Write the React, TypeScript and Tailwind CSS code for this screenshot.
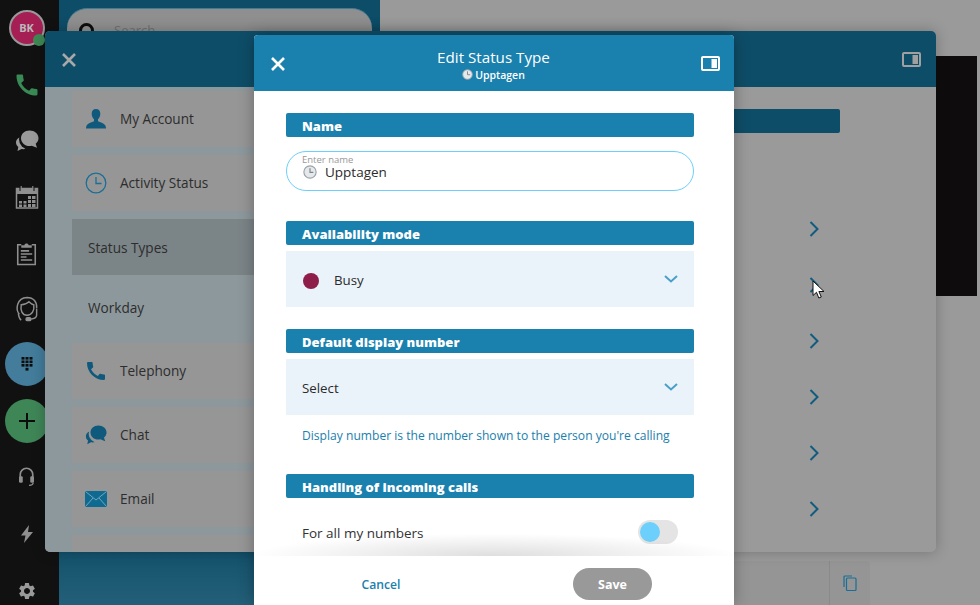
import React from 'react';
import { MdCall, MdSettings } from 'react-icons/md';

const ClockIcon: React.FC<{ className?: string }> = ({ className }) => (
    <svg viewBox="0 0 24 24" className={className} fill="none">
        <circle cx="12" cy="12" r="10.5" fill="#e6e9ec" stroke="#9aa3a8" strokeWidth="2" />
        <path d="M12 6v6.5h5" stroke="#7d868b" strokeWidth="2" strokeLinecap="round" />
    </svg>
);

const ChatIcon: React.FC<{ color: string; cut: string; className?: string }> = ({ color, cut, className }) => (
    <svg viewBox="0 0 24 24" className={className}>
        <path d="M7 8c-3.500 0-6 2.500-6 5.500 0 1.800.9 3.400 2.300 4.400L2.500 22l4-2c3 .6 6-.6 7-3z" fill={color} />
        <circle cx="14" cy="10.500" r="10" fill={cut} />
        <path d="M14.500 1.500c-4.800 0-8.500 3.400-8.500 7.700 0 4.300 3.700 7.800 8.500 7.800.8 0 1.500-.1 2.200-.3l5.300 2-1.300-4c1.800-1.400 2.800-3.400 2.800-5.500 0-4.300-3.800-7.700-9-7.700z" fill={color} />
    </svg>
);

const CalendarIcon: React.FC = () => (
    <svg viewBox="0 0 24 24" className="h-[24px] w-[24px]" fill="none">
        <path d="M1.500 3.500h21v19.500h-21z" stroke="#8f8f8f" strokeWidth="1.500" />
        <path d="M1.500 3.500h21V9h-21z" fill="#8f8f8f" />
        <path d="M6 1v5M18 1v5" stroke="#8f8f8f" strokeWidth="1.500" />
        <path d="M5 1v5M19 1v5" stroke="#111" strokeWidth="1" />
        <path d="M4 16h3v2.500H4zM4 19.500h3V22H4zM8.500 16h3v2.500h-3zM8.500 19.500h3V22h-3zM13 11h3v3h-3zM13 15h3v3h-3zM13 19h3v3h-3zM17 11h3.500v3H17zM17 15h3.500v3H17zM17 19h3.500v3H17z" fill="#8f8f8f" />
    </svg>
);

const ClipboardIcon: React.FC = () => (
    <svg viewBox="0 0 24 28" className="h-[25px] w-[21px]" fill="none">
        <path d="M6 4H2v22.500h20V4h-4" stroke="#8f8f8f" strokeWidth="1.800" />
        <path d="M6 7.500V4.500h3.500C10 2 14 2 14.500 4.500H18v3z" fill="#8f8f8f" />
        <path d="M5.500 11H15M5.500 14.500h13M5.500 18H12M5.500 21.500h13" stroke="#8f8f8f" strokeWidth="1.800" />
    </svg>
);

const AgentIcon: React.FC = () => (
    <svg viewBox="0 0 24 28" className="h-[27px] w-[24px]" fill="none" stroke="#8f8f8f" strokeWidth="1.500">
        <path d="M4 19C0 14 1 2 12 1.500c7 0 10.500 5 10 11" />
        <path d="M6 9c3 0 6-1 8-3 2 2 4 3 5 3 1 6-2 11-7 11S5 15 6 9z" />
        <path d="M3 18c.5 4 1.500 6 3 7M22 13v7c0 3-3 4-8 4" />
        <rect x="11" y="22.500" width="5" height="3" rx="1.500" fill="#8f8f8f" />
    </svg>
);

const DialIcon: React.FC = () => (
    <svg viewBox="0 0 12 14" className="h-[14px] w-[12px]" fill="#0d0d0d">
        {[0, 3.500, 7].map((y) =>
            [0.500, 4.500, 8.500].map((x) => <rect key={`${x}-${y}`} x={x} y={y} width="3" height="2.600" />)
        )}
        <rect x="4.500" y="10.800" width="3" height="2.800" />
    </svg>
);

const HeadsetIcon: React.FC = () => (
    <svg viewBox="0 0 20 24" className="h-[20px] w-[17px]" fill="none">
        <path d="M2.500 14V9a7.500 7.500 0 0 1 15 0v5" stroke="#8f8f8f" strokeWidth="2" />
        <rect x="1" y="11" width="4.500" height="8" rx="1.500" fill="#8f8f8f" />
        <rect x="14.500" y="11" width="4.500" height="8" rx="1.500" fill="#8f8f8f" />
        <path d="M18 19c0 2.500-2 3-5 3" stroke="#8f8f8f" strokeWidth="1.500" />
    </svg>
);

const PanelToggle: React.FC<{ color: string }> = ({ color }) => (
    <svg viewBox="0 0 19 15" className="h-[15px] w-[19px]">
        <rect x="1" y="1" width="17" height="13" rx="1" fill="none" stroke={color} strokeWidth="2" />
        <rect x="10.500" y="3" width="5.500" height="9" fill={color} />
    </svg>
);

const CloseIcon: React.FC<{ color: string }> = ({ color }) => (
    <svg viewBox="0 0 16 16" className="mt-[2px] h-[16px] w-[16px]">
        <path d="M2 2l12 12M14 2L2 14" stroke={color} strokeWidth="2.600" />
    </svg>
);

const SelectChevron: React.FC = () => (
    <svg viewBox="0 0 14 8" className="mb-[5px] h-[8px] w-[14px]" fill="none">
        <path d="M1 1l6 5.500L13 1" stroke="#4a9fc8" strokeWidth="2" />
    </svg>
);

const RowChevron: React.FC = () => (
    <svg viewBox="0 0 10 16" className="h-[16px] w-[10px]" fill="none">
        <path d="M1.500 1l7 7-7 7" stroke="#0f5c7f" strokeWidth="2" />
    </svg>
);

const navTop = [
    {
        label: 'My Account',
        icon: (
            <svg viewBox="0 0 20 20" className="h-[20px] w-[20px]" fill="#0f5a7c">
                <path d="M10 0c2.800 0 4.300 2 4.300 4.800 0 2.500-1 4.500-2.300 5.500v2c1.500 1 6 1.500 7.500 4.500.3.800.5 1.700.5 2.700H0c0-1 .2-1.900.5-2.700C2 13.800 6.500 13.300 8 12.300v-2C6.700 9.300 5.700 7.300 5.700 4.800 5.700 2 7.200 0 10 0z" />
            </svg>
        ),
    },
    {
        label: 'Activity Status',
        icon: (
            <svg viewBox="0 0 22 22" className="h-[22px] w-[22px]" fill="none">
                <circle cx="11" cy="11" r="9.800" stroke="#1a6f96" strokeWidth="1.300" />
                <path d="M11 5v6.500h5.500" stroke="#1a6f96" strokeWidth="1.300" />
            </svg>
        ),
    },
];

const navBottom = [
    { label: 'Telephony', icon: <MdCall className="h-[24px] w-[24px] text-[#0f5a7c]" /> },
    { label: 'Chat', icon: <ChatIcon color="#0f5a7c" cut="#969696" className="h-[22px] w-[22px]" /> },
    {
        label: 'Email',
        icon: (
            <svg viewBox="0 0 22 16" className="h-[16px] w-[22px]" fill="none">
                <rect width="22" height="16" rx="1" fill="#0f6a92" />
                <path d="M.5.500L11 9 21.500.500M.5 15.500l7.500-8.500M21.500 15.500L14 7" stroke="#8fb5c5" strokeWidth=".8" />
            </svg>
        ),
    },
];

const NavCard: React.FC<{ label: string; icon: React.ReactNode }> = ({ label, icon }) => (
    <div className="flex h-[56px] items-center bg-[#969696]">
        <div className="flex w-[48px] shrink-0 justify-center">{icon}</div>
        <span className="text-[13.600px] text-[#2d2d2d]">{label}</span>
    </div>
);

const SectionBar: React.FC<{ label: string; className?: string }> = ({ label, className }) => (
    <div className={`flex h-[24px] items-center rounded-[2px] bg-[#1a80ad] pt-[3px] pl-[16px] text-[13px] font-extrabold text-white ${className ?? ''}`}>
        {label}
    </div>
);

const App: React.FC = () => {
    return (
        <div className="relative flex h-[605px] w-[980px] overflow-hidden bg-[#9a9a9a] font-['Open_Sans',sans-serif]">
            {/* Left rail */}
            <div className="flex h-[605px] w-[59px] shrink-0 flex-col items-center overflow-hidden bg-[#111111] [&>*]:shrink-0">
                <div className="relative mt-[10px] mb-[11px] flex h-[36px] w-[36px] items-center justify-center rounded-full border-2 border-[#999] bg-[#a51f55] text-[11px] font-bold text-[#b9b9b9] -translate-x-[3px]">
                    BK
                    <span className="absolute -right-[2px] -bottom-[2px] h-[12px] w-[12px] rounded-full bg-[#3f8a55]" />
                </div>
                <div className="flex h-[56px] items-center -translate-x-[3px]"><MdCall className="h-[28px] w-[28px] text-[#3a8a55]" /></div>
                <div className="flex h-[56px] items-center -translate-x-[3px]"><ChatIcon color="#9a9a9a" cut="#111111" className="h-[24px] w-[24px]" /></div>
                <div className="flex h-[56px] items-center -translate-x-[3px]"><CalendarIcon /></div>
                <div className="flex h-[56px] items-center -translate-x-[3px]"><ClipboardIcon /></div>
                <div className="flex h-[56px] items-center -translate-x-[3px]"><AgentIcon /></div>
                <div className="mt-[5px] flex h-[44px] w-[44px] items-center justify-center rounded-full bg-[#437d9b] -translate-x-[3px]"><DialIcon /></div>
                <div className="mt-[13px] flex h-[44px] w-[44px] items-center justify-center rounded-full bg-[#3f8657] -translate-x-[3px]">
                    <svg viewBox="0 0 16 16" className="h-[16px] w-[16px]"><path d="M8 0v16M0 8h16" stroke="#0d0d0d" strokeWidth="2" /></svg>
                </div>
                <div className="mt-[6px] flex h-[56px] items-center -translate-x-[3px]"><HeadsetIcon /></div>
                <div className="flex h-[58px] items-center -translate-x-[3px]">
                    <svg viewBox="0 0 12 18" className="h-[18px] w-[12px]" fill="#8f8f8f"><path d="M8 0L0 10.500h4.500L3 18l9-11H7z" /></svg>
                </div>
                <div className="flex h-[56px] items-center -translate-x-[3px]"><MdSettings className="h-[20px] w-[20px] text-[#9a9a9a]" /></div>
            </div>

            {/* Dimmed page behind the windows */}
            <div className="relative h-full w-[321px] shrink-0 bg-[linear-gradient(180deg,#0e4d68_0%,#0e4d68_88%,#235f78_100%)] px-[8px] pt-[8px]">
                <div className="flex h-[60px] rounded-t-[20px] border-t border-[#3f7d95] bg-[#8f8f8f] pl-[12px]">
                    <div className="mt-[14px] h-[15px] w-[15px] rounded-full border-[3px] border-[#0d0d0d]" />
                    <span className="mt-[12px] ml-[20px] text-[13px] text-[#6f6f6f]">Search</span>
                </div>
            </div>
            <div className="relative flex-1">
                <div className="absolute top-[56px] right-[3px] h-[240px] w-[41px] bg-[#0e0c0c]" />
                <div className="absolute right-[110px] bottom-0 flex h-[44px] w-[140px] justify-end rounded-tr-[4px] bg-[#959595]">
                    <div className="flex w-[41px] items-center justify-center border-l border-[#8a8a8a]">
                        <svg viewBox="0 0 14 16" className="h-[16px] w-[14px]" fill="none" stroke="#1a6f96" strokeWidth="1.200">
                            <rect x="3.500" y="3" width="9.500" height="12.500" rx="1" />
                            <path d="M1 12V2a1 1 0 0 1 1-1h7" />
                        </svg>
                    </div>
                </div>
            </div>

            {/* Settings window */}
            <div className="absolute top-[31px] left-[45px] flex h-[521px] w-[891px] flex-col overflow-hidden rounded-[5px] bg-[#9a9a9a] shadow-[0_0_14px_rgba(0,0,0,0.25)]">
                <div className="flex h-[56px] shrink-0 items-center justify-between bg-[#0e4d68] pr-[15px] pl-[16px]">
                    <CloseIcon color="#a8a8a8" />
                    <PanelToggle color="#a0a0a0" />
                </div>
                <div className="flex flex-1">
                    <div className="w-[209px] shrink-0 bg-[#8d989c] pt-[4px] pl-[27px]">
                        <div className="flex flex-col gap-[8px]">
                            {navTop.map((item) => <NavCard key={item.label} {...item} />)}
                            <div className="flex h-[56px] items-center bg-[#7b8487] pt-[2px] pl-[16px] text-[13.600px] text-[#2d2d2d]">Status Types</div>
                        </div>
                        <div className="flex h-[68px] items-center pb-[2px] pl-[16px] text-[13.600px] text-[#2d2d2d]">Workday</div>
                        <div className="flex flex-col gap-[8px]">
                            {navBottom.map((item) => <NavCard key={item.label} {...item} />)}
                            <div className="h-[56px] bg-[#969696]" />
                        </div>
                    </div>
                    <div className="flex-1 pt-[22px] pr-[96px]">
                        <div className="h-[24px] rounded-r-[2px] bg-[#0e4d68]" />
                        <div className="mt-[68px] flex flex-col">
                            {[0, 1, 2, 3, 4, 5].map((i) => (
                                <div key={i} className="flex h-[56px] items-center justify-end pr-[21px]"><RowChevron /></div>
                            ))}
                        </div>
                    </div>
                </div>
            </div>

            {/* Edit dialog */}
            <div className="absolute top-[35px] left-[254px] flex h-[570px] w-[480px] flex-col rounded-t-[4px] bg-white shadow-[0_0_16px_rgba(0,0,0,0.3)]">
                <div className="flex h-[56px] shrink-0 items-center justify-between rounded-t-[4px] bg-[#1a80ad] pr-[14px] pl-[16px] text-white">
                    <CloseIcon color="#ffffff" />
                    <div className="flex flex-col items-center pt-[2px]">
                        <span className="text-[15.200px] leading-[21px]">Edit Status Type</span>
                        <span className="flex items-center gap-[2px] text-[10.500px] leading-[14px] font-semibold">
                            <ClockIcon className="h-[11px] w-[11px]" />
                            Upptagen
                        </span>
                    </div>
                    <PanelToggle color="#ffffff" />
                </div>

                <div className="relative flex-1 overflow-hidden pt-[22px] pr-[40px] pl-[32px]">
                    <SectionBar label="Name" />
                    <div className="relative mt-[14px] flex h-[40px] items-center rounded-full border border-[#6dcffb] pt-[2px] pl-[16px]">
                        <span className="absolute top-[3px] left-[15px] text-[9.500px] leading-[9px] text-[#999999]">Enter name</span>
                        <ClockIcon className="h-[14px] w-[14px]" />
                        <span className="ml-[8px] text-[13.500px] leading-[14px] text-[#2b2b2b]">Upptagen</span>
                    </div>

                    <SectionBar label="Availability mode" className="mt-[30px]" />
                    <div className="mt-[6px] flex h-[56px] items-center justify-between bg-[#ebf3fa] pt-[4px] pr-[16px] pl-[17px]">
                        <div className="flex items-center gap-[15px]">
                            <span className="h-[16px] w-[16px] rounded-full bg-[#8f1d4a]" />
                            <span className="text-[13.300px] text-[#2b2b2b]">Busy</span>
                        </div>
                        <SelectChevron />
                    </div>

                    <SectionBar label="Default display number" className="mt-[22px]" />
                    <div className="mt-[6px] flex h-[56px] items-center justify-between bg-[#ebf3fa] pt-[4px] pr-[16px] pl-[16px]">
                        <span className="text-[13.300px] text-[#2b2b2b]">Select</span>
                        <SelectChevron />
                    </div>
                    <div className="flex h-[59px] items-start pt-[12px] pl-[16px] text-[12.100px] leading-[18px] text-[#1a80ad]">
                        Display number is the number shown to the person you're calling
                    </div>

                    <SectionBar label="Handling of incoming calls" />
                    <div className="mt-[22px] flex h-[24px] items-center justify-between pr-[16px] pl-[16px]">
                        <span className="pt-[2px] text-[13.500px] text-[#333333]">For all my numbers</span>
                        <div className="flex h-[24px] w-[40px] items-center rounded-full bg-[#e4e4e4] pl-[2px]">
                            <span className="h-[20px] w-[20px] rounded-full bg-[#6dcffb]" />
                        </div>
                    </div>

                    <div className="absolute right-0 bottom-0 left-0 h-[22px] bg-[radial-gradient(ellipse_at_bottom,rgba(0,0,0,0.13),rgba(0,0,0,0)_72%)]" />
                </div>

                <div className="flex h-[49px] shrink-0 items-start bg-white pt-[12px]">
                    <div className="flex h-[32px] w-[254px] items-center justify-center pt-[2px] text-[12.200px] font-semibold text-[#1a80ad]">Cancel</div>
                    <div className="ml-[65px] flex h-[32px] w-[79px] items-center justify-center rounded-full bg-[#999999] pt-[2px] text-[12.500px] font-bold text-white">Save</div>
                </div>
            </div>

            {/* Mouse pointer */}
            <svg viewBox="0 0 13 20" className="absolute top-[280px] left-[812px] h-[20px] w-[13px]">
                <path d="M1 1v14.500l3.500-3.200 2.300 5.700 2.500-1-2.400-5.500H12z" fill="#ffffff" stroke="#111111" strokeWidth="1" />
            </svg>
        </div>
    );
};

export default App;
